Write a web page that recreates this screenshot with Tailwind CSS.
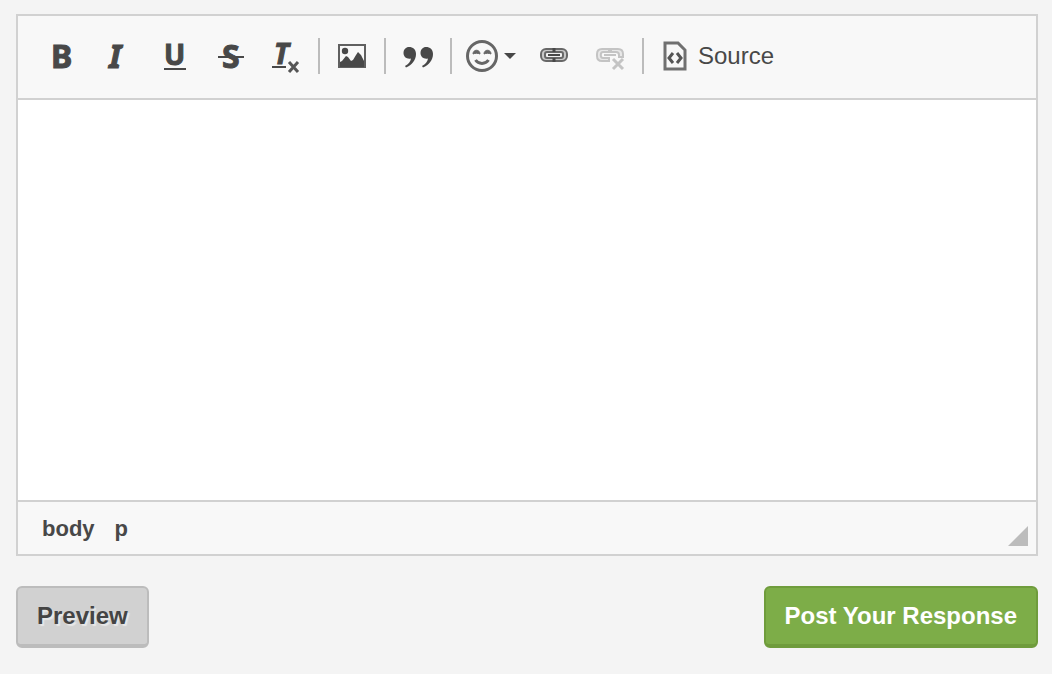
<!DOCTYPE html>
<html lang="en">
<head>
    <meta charset="utf-8">
    <meta name="viewport" content="width=device-width, initial-scale=1">
    <title>Post Your Response</title>
    <script src="https://cdn.jsdelivr.net/npm/@tailwindcss/browser@4"></script>
</head>

<body class="bg-[#f4f4f4] text-[#484848] font-['Liberation_Sans',Arial,sans-serif]">
    <form class="pl-4 pr-3.5 pt-3.5 pb-6" onsubmit="return false">
        <div class="border-2 border-[#d1d1d1] bg-[#f8f8f8]">
            <!-- toolbar -->
            <div class="flex flex-wrap items-center px-4 pb-0.5 h-[84px] border-b-2 border-[#d1d1d1]" role="toolbar" aria-label="Editor toolbar">
                <button type="button" class="flex justify-center w-14 py-2" aria-label="Bold">
                    <svg class="size-8 overflow-visible" viewBox="0 0 32 32" fill="currentColor" stroke="currentColor">
                        <text x="5" y="28" class="font-['Noto_Sans',sans-serif] font-bold text-[32px]">B</text>
                    </svg>
                </button>
                <button type="button" class="flex justify-center w-14 py-2" aria-label="Italic">
                    <svg class="size-8 overflow-visible" viewBox="0 0 32 32" fill="currentColor" stroke="currentColor">
                        <text x="7" y="28" class="font-['Noto_Sans',sans-serif] font-bold italic text-[32px]">I</text>
                    </svg>
                </button>
                <button type="button" class="flex justify-center w-14 py-2" aria-label="Underline">
                    <svg class="size-8 overflow-visible" viewBox="0 0 32 32" fill="currentColor">
                        <text x="6" y="25" stroke="currentColor" class="font-['Noto_Sans',sans-serif] font-bold text-[28px]">U</text>
                        <path d="M6 28h22v2H6z"/>
                    </svg>
                </button>
                <button type="button" class="flex justify-center w-14 py-2" aria-label="Strikethrough">
                    <svg class="size-8 overflow-visible" viewBox="0 0 32 32" fill="currentColor">
                        <text x="8" y="28" stroke="currentColor" class="font-['Noto_Sans',sans-serif] font-bold text-[32px]">S</text>
                        <path d="M4 16h26v2H4z"/>
                    </svg>
                </button>
                <button type="button" class="flex justify-center w-14 py-2" aria-label="Remove format">
                    <svg class="size-8 overflow-visible" viewBox="0 0 32 32" fill="currentColor">
                        <text x="4" y="24" stroke="currentColor" class="font-['Noto_Sans',sans-serif] font-bold italic text-[28px]">T</text>
                        <path d="M2 26h14v2H2z"/>
                        <path d="M19 22l9 10M28 22l-9 10" fill="none" stroke="#555" stroke-width="3"/>
                    </svg>
                </button>
                <span class="w-0.5 h-9 mx-1 bg-[#bcbcbc]"></span>

                <button type="button" class="flex justify-center w-14 py-2" aria-label="Image">
                    <svg class="size-8" viewBox="0 0 32 32" fill="currentColor">
                        <path d="M3 5h26v22H3z" fill="none" stroke="#606060" stroke-width="2"/>
                        <circle cx="9" cy="11" r="3.2"/>
                        <path d="M4 27v-5l2-1 4-5 2 1 3 4 2-1 3-5 2-3 3 3 3 6v6z"/>
                    </svg>
                </button>
                <span class="w-0.5 h-9 mx-1 bg-[#bcbcbc]"></span>

                <button type="button" class="flex justify-center w-14 py-2" aria-label="Block quote">
                    <svg class="size-8" viewBox="0 0 32 32" fill="currentColor">
                        <path d="M7 7c4 0 7 2.500 7 7 0 6-4 11-10 13.500l-1-1.500c3.500-2 5.500-4.500 6-7.500-4 1-7.500-1.500-7.500-5.500C1.500 9.500 4 7 7 7z"/>
                        <path d="M24 7c4 0 7 2.500 7 7 0 6-4 11-10 13.500l-1-1.500c3.500-2 5.500-4.500 6-7.500-4 1-7.500-1.500-7.500-5.500 0-3.500 2.500-6 5.500-6z"/>
                    </svg>
                </button>
                <span class="w-0.5 h-9 mx-1 bg-[#bcbcbc]"></span>

                <button type="button" class="flex items-center gap-1.5 w-[70px] py-2 pl-2.5" aria-label="Smiley">
                    <svg class="size-8" viewBox="0 0 32 32" fill="none" stroke="#666">
                        <circle cx="16" cy="16" r="14.500" stroke-width="3"/>
                        <path d="M7 14c0-5 7-5 7 0-2-1-5-1-7 0zM18 14c0-5 7-5 7 0-2-1-5-1-7 0z" fill="#666" stroke-width="1"/>
                        <path d="M9.500 20c3 4.500 10 4.500 13 0" stroke-width="3"/>
                    </svg>
                    <svg class="w-3 h-1.5" viewBox="0 0 12 6" fill="currentColor"><path d="M0 0h12L6 6z"/></svg>
                </button>
                <button type="button" class="flex justify-center w-14 py-2" aria-label="Link">
                    <svg class="size-8" viewBox="0 0 32 32" fill="none" stroke="#686868" stroke-width="2">
                        <rect x="3" y="9" width="26" height="12" rx="5" fill="#c8c8c8"/>
                        <rect x="7" y="12" width="18" height="6" rx="2" fill="#f0f0f0"/>
                        <path d="M16 8v4M16 18v4" stroke="#484848" stroke-width="3"/>
                        <path d="M10 15h12" stroke="#484848"/>
                    </svg>
                </button>
                <button type="button" class="flex justify-center w-14 py-2" aria-label="Unlink" disabled>
                    <svg class="size-8" viewBox="0 0 32 32" fill="none" stroke="#c4c4c4" stroke-width="2">
                        <path d="M15 9H8c-3 0-5 2-5 5v2c0 3 2 5 5 5h7v-3H9c-3 0-3-6 0-6h6zM17 9h7c3 0 5 2 5 5v3h-4v-2c0-2-1-3-3-3h-5z" fill="#e8e8e8"/>
                        <path d="M10 15h12"/>
                        <path d="M19 19l10 10M29 19l-10 10" stroke-width="3"/>
                    </svg>
                </button>
                <span class="w-0.5 h-9 mx-1 bg-[#bcbcbc]"></span>

                <button type="button" class="flex items-center gap-2 py-2 pl-2.5 pr-3 text-2xl">
                    <svg class="size-8" viewBox="0 0 32 32" fill="none" stroke="#707070">
                        <path d="M7 3h13l7 7v19H7z" stroke-width="3"/>
                        <path d="M15 13l-4 5 4 5M19 13l4 5-4 5" stroke="#555" stroke-width="3"/>
                    </svg>
                    Source
                </button>
            </div>

            <!-- editing area -->
            <textarea class="block w-full h-[400px] p-5 bg-white text-2xl resize-none outline-none" aria-label="Response"></textarea>

            <!-- element path -->
            <div class="flex items-center justify-between h-[54px] pl-6 pr-2 border-t-2 border-[#d1d1d1]">
                <nav class="flex gap-5 text-[22px] font-bold" aria-label="Elements path">
                    <a href="#">body</a>
                    <a href="#">p</a>
                </nav>
                <svg class="size-5 self-end mb-2" viewBox="0 0 20 20" fill="#bcbcbc"><path d="M20 0v20H0z"/></svg>
            </div>
        </div>

        <div class="flex justify-between mt-[30px] text-2xl font-bold">
            <button type="button" class="px-[19px] py-3 border-2 border-b-4 border-[#bcbcbc] rounded-md bg-[#d1d1d1] text-[#444] text-shadow-[2px_2px_1px_#e8e8e8]">Preview</button>
            <button type="submit" class="px-[19px] py-3 border-2 border-b-4 border-[#6f9c3c] rounded-md bg-[#7dad48] text-white">Post Your Response</button>
        </div>
    </form>
</body>
</html>
